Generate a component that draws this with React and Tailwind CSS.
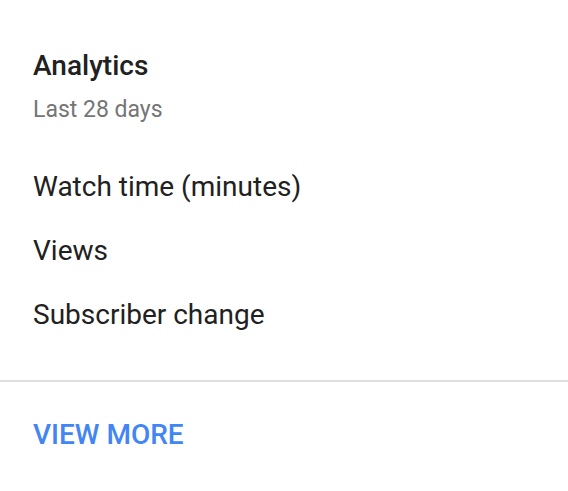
export default function App() {
  return (
    <div className="w-[568px] h-[491px] bg-white" style={{ fontFamily: 'Roboto, "Liberation Sans", sans-serif' }}>
      <div className="px-[33px] pt-[52px]">
        <h1 className="text-[28px] leading-[28px] font-medium text-[#212121]">Analytics</h1>
        <p className="mt-[16px] text-[23px] leading-[28px] text-[#757575]">Last 28 days</p>
        <div className="mt-[49px] flex flex-col gap-[36px] text-[28px] leading-[28px] text-[#212121]">
          <div>Watch time (minutes)</div>
          <div>Views</div>
          <div>Subscriber change</div>
        </div>
      </div>
      <div className="mt-[51px] h-[2px] bg-[#dedede]" />
      <div className="px-[33px] pt-[39px]">
        <button className="text-[28px] leading-[28px] font-medium text-[#4285f4]">VIEW MORE</button>
      </div>
    </div>
  );
}
